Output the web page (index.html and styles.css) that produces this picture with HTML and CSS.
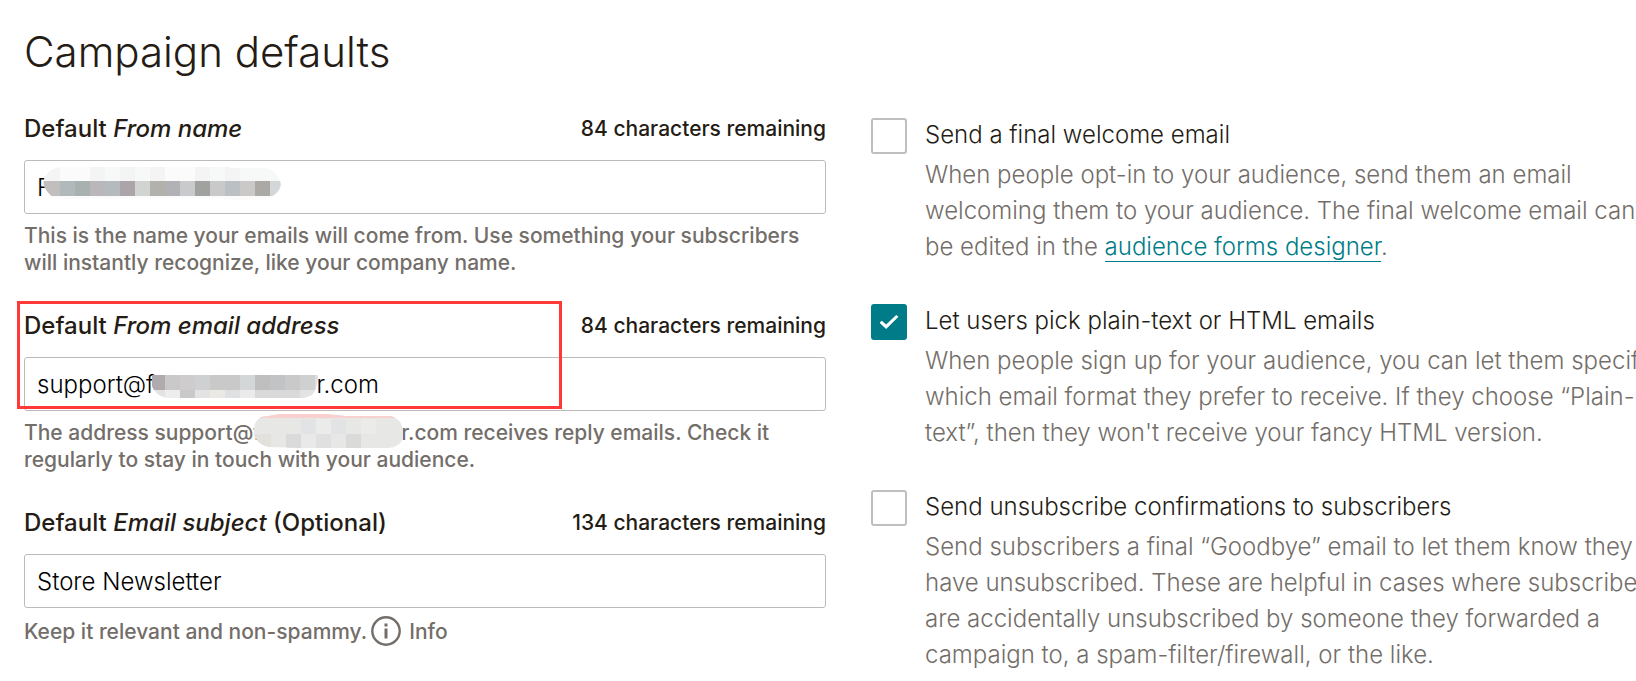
FILE: index.html
```html
<!DOCTYPE html>
<html lang="en">
<head>
<meta charset="utf-8">
<title>Campaign defaults</title>
<link rel="stylesheet" href="styles.css">
</head>
<body>
<main class="page">
  <h1 class="title">Campaign defaults</h1>
  <form class="columns">
    <div class="fields">
      <div class="field">
        <div class="field-head">
          <label class="label" for="from-name">Default <em>From name</em></label>
          <span class="counter">84 characters remaining</span>
        </div>
        <div class="control">
          <input class="input" id="from-name" type="text" value="F">
          <svg class="mask mask-name" width="240" height="34" viewBox="42 165 240 34" aria-hidden="true" shape-rendering="crispEdges">
            <clipPath id="c1"><path d="M60 166H230V167H266Q276 169 280 180Q282 184 279 189Q275 196 262 199H224V197H200L60 198Q50 197 45 187Q42 182 45 176Q49 168 60 166Z"/></clipPath>
            <g clip-path="url(#c1)">
              <path fill="#fbfbfb" d="M42 165h240v34H42z"/>
              <path fill="#f4f4f4" d="M42 165h18v15H42zM90 165h15v15H90zM120 165h15v15h-15zM150 165h15v15h-15zM195 165h15v15h-15zM225 165h15v15h-15z"/>
              <path fill="#f7f8f8" d="M105 165h15v15h-15zM135 165h15v15h-15zM210 165h15v15h-15zM240 165h42v15h-42z"/>
              <path fill="#c0bfbe" d="M42 180h18v15H42z"/><path fill="#b2b9bd" d="M60 180h15v15H60z"/><path fill="#a9b0b0" d="M75 180h15v15H75z"/><path fill="#b9b7b9" d="M90 180h15v15H90z"/><path fill="#b5babe" d="M105 180h15v15h-15z"/><path fill="#aba5aa" d="M120 180h15v15h-15z"/><path fill="#d1d4d1" d="M135 180h15v15h-15z"/><path fill="#b2b1ab" d="M150 180h15v15h-15z"/><path fill="#b1b2b6" d="M165 180h15v15h-15z"/><path fill="#c9cacb" d="M180 180h15v15h-15z"/><path fill="#a0a29f" d="M195 180h15v15h-15z"/><path fill="#c9c9c9" d="M210 180h15v15h-15z"/><path fill="#bbc0c4" d="M225 180h15v15h-15z"/><path fill="#cac9c8" d="M240 180h15v15h-15z"/><path fill="#aaa9a5" d="M255 180h15v15h-15z"/><path fill="#d4d7da" d="M270 180h12v15h-12z"/>
            </g>
          </svg>
        </div>
        <p class="help">This is the name your emails will come from. Use something your subscribers<br>will instantly recognize, like your company name.</p>
      </div>

      <div class="field">
        <div class="field-head">
          <label class="label" for="from-email">Default <em>From email address</em></label>
          <span class="counter">84 characters remaining</span>
        </div>
        <div class="control">
          <input class="input" id="from-email" type="text" value="support@f&nbsp;&nbsp;&nbsp;&nbsp;&nbsp;&nbsp;&nbsp;&nbsp;&nbsp;&nbsp;&nbsp;&nbsp;&nbsp;&nbsp;&nbsp;&nbsp;&nbsp;&nbsp;&nbsp;&nbsp;&nbsp;&nbsp;&nbsp;&nbsp;r.com">
          <svg class="mask mask-email" width="166" height="23" viewBox="152 375 166 23" aria-hidden="true" shape-rendering="crispEdges">
            <clipPath id="c2"><path d="M152 375H318Q317 390 312 395L304 398H166Q155 395 152 386Z"/></clipPath>
            <g clip-path="url(#c2)">
              <path fill="#c9c9c9" d="M152 375h166v15H152z"/><path fill="#b0aaad" d="M152 375h13v15h-13z"/><path fill="#cfcccd" d="M180 375h15v15h-15z"/><path fill="#ced0d2" d="M195 375h15v15h-15z"/><path fill="#d3d7d7" d="M240 375h15v15h-15z"/><path fill="#bfbfbf" d="M255 375h15v15h-15z"/><path fill="#c2c3c5" d="M270 375h15v15h-15z"/><path fill="#cfd0d2" d="M300 375h15v15h-15z"/><path fill="#e0e0e0" d="M315 375h3v15h-3z"/>
              <path fill="#e3e3e3" d="M152 390h166v8H152z"/><path fill="#ededed" d="M165 390h15v8h-15z"/><path fill="#c9c9c9" d="M180 390h15v8h-15z"/><path fill="#eae9e4" d="M210 390h15v8h-15z"/><path fill="#dee0e2" d="M225 390h15v8h-15z"/><path fill="#ebebeb" d="M240 390h15v8h-15z"/><path fill="#d9d9d9" d="M255 390h45v8h-45z"/>
            </g>
          </svg>
        </div>
        <p class="help">The address support@f<span class="gap"><svg class="mask mask-address" width="150" height="34" viewBox="252 415 150 34" aria-hidden="true" shape-rendering="crispEdges">
            <clipPath id="c3"><path d="M260 418L280 415H325L345 417H390Q400 420 402 430V440Q398 448 388 449H300L268 448Q258 446 254 438Q250 424 260 418Z"/></clipPath>
            <g clip-path="url(#c3)">
              <path fill="#e7e7e6" d="M252 415h150v34H252z"/><path fill="#f8d0d0" d="M252 415h150v4H252z"/><path fill="#e2e3e4" d="M300 420h15v15h-15zM330 420h15v15h-15z"/><path fill="#ebebe9" d="M315 420h15v15h-15zM360 420h15v15h-15z"/>
              <path fill="#e2e1dc" d="M252 435h18v14h-18z"/><path fill="#dadada" d="M285 435h15v14h-15zM345 435h15v14h-15z"/><path fill="#e0e0e0" d="M315 435h15v14h-15z"/><path fill="#e9e9e9" d="M300 435h15v14h-15z"/>
            </g>
          </svg></span>r.com receives reply emails. Check it<br>regularly to stay in touch with your audience.</p>
        <div class="highlight"></div>
      </div>

      <div class="field">
        <div class="field-head">
          <label class="label" for="subject">Default <em>Email subject</em> (Optional)</label>
          <span class="counter">134 characters remaining</span>
        </div>
        <div class="control">
          <input class="input" id="subject" type="text" value="Store Newsletter">
        </div>
        <div class="help help-row">
          <span>Keep it relevant and non-spammy.</span>
          <button class="info" type="button">
            <svg width="30" height="30" viewBox="0 0 30 30" aria-hidden="true"><circle cx="15" cy="15" r="13.7" fill="none" stroke="#736e69" stroke-width="2.4"/><path d="M13.5 7.5h3v3h-3zM13.5 12.5h3v10h-3z" fill="#736e69"/></svg>
            <span>Info</span>
          </button>
        </div>
      </div>
    </div>

    <div class="options">
      <div class="option">
        <input class="check" id="welcome" type="checkbox">
        <div>
          <label class="option-title" for="welcome">Send a final welcome email</label>
          <p class="option-text">When people opt-in to your audience, send them an email<br>welcoming them to your audience. The final welcome email can<br>be edited in the <a class="link" href="#">audience forms designer</a>.</p>
        </div>
      </div>
      <div class="option">
        <input class="check" id="format" type="checkbox" checked>
        <div>
          <label class="option-title" for="format">Let users pick plain-text or HTML emails</label>
          <p class="option-text">When people sign up for your audience, you can let them specify<br>which email format they prefer to receive. If they choose “Plain-<br>text”, then they won't receive your fancy HTML version.</p>
        </div>
      </div>
      <div class="option">
        <input class="check" id="goodbye" type="checkbox">
        <div>
          <label class="option-title" for="goodbye">Send unsubscribe confirmations to subscribers</label>
          <p class="option-text">Send subscribers a final “Goodbye” email to let them know they<br>have unsubscribed. These are helpful in cases where subscribers<br>are accidentally unsubscribed by someone they forwarded a<br>campaign to, a spam-filter/firewall, or the like.</p>
        </div>
      </div>
    </div>
  </form>
</main>
</body>
</html>
```
FILE: styles.css
```css
* { box-sizing: border-box; }

body {
  margin: 0;
  background: #fff;
  color: #241c15;
  font-family: Inter, "Liberation Sans", sans-serif;
  font-size: 24px;
  font-weight: 350;
  overflow-x: hidden;
}

.page { padding: 24px 0 0 24px; }

.title {
  margin: 0 0 32px;
  font-size: 42px;
  font-weight: 350;
  line-height: 56px;
}

.columns {
  display: grid;
  grid-template-columns: 1fr 1fr;
  column-gap: 45px;
  margin-right: -37px;
}

.fields { display: grid; gap: 33px; align-content: start; }
.field { position: relative; }

.field-head {
  display: flex;
  justify-content: space-between;
  align-items: center;
  margin-bottom: 14px;
  line-height: 34px;
  font-weight: 500;
  white-space: nowrap;
}
.label { font-size: 24px; }
.counter { font-size: 21px; }

.control { position: relative; }

.input {
  display: block;
  width: 100%;
  height: 54px;
  padding: 0 12px;
  border: 1px solid #bdbbb9;
  border-radius: 3px;
  background: #fff;
  color: #000;
  font: inherit;
}

.mask { position: absolute; }
.mask-name { left: 18px; top: 6px; }
.mask-email { left: 128px; top: 18px; }
.gap { position: relative; display: inline-block; width: 140px; }
.mask-address { left: -8px; bottom: -8px; }

.help {
  margin: 8px 0 0;
  color: #736e69;
  font-size: 21px;
  font-weight: 500;
  line-height: 27px;
  white-space: nowrap;
}
.help-row { display: flex; align-items: center; gap: 4px; }

.info {
  display: flex;
  align-items: center;
  gap: 8px;
  padding: 0;
  border: 0;
  background: none;
  color: inherit;
  font: inherit;
}

.highlight {
  position: absolute;
  left: -7px;
  top: -8px;
  width: 545px;
  height: 108px;
  border: 3px solid #ff3838;
}

.options { display: grid; gap: 39px; align-content: start; padding-top: 6px; }
.option { display: flex; gap: 18px; }

.check {
  appearance: none;
  flex: none;
  display: grid;
  place-items: center;
  width: 36px;
  height: 36px;
  margin: 0;
  border: 2px solid #c1bfbd;
  border-radius: 3px;
  background: #fff;
}
.check:checked { border-color: #007c89; background: #007c89; }
.check:checked::after {
  content: "";
  width: 19px;
  height: 14px;
  background: #fff;
  clip-path: polygon(0 55%, 12% 41%, 35% 68%, 88% 0, 100% 13%, 35% 100%);
}

.option-title {
  display: block;
  margin-bottom: 5px;
  line-height: 34px;
  white-space: nowrap;
}
.option-text {
  margin: 0;
  color: #736e69;
  line-height: 36px;
  white-space: nowrap;
}
.link {
  color: #007c89;
  text-decoration: none;
  border-bottom: 1px solid #007c89;
}
```
